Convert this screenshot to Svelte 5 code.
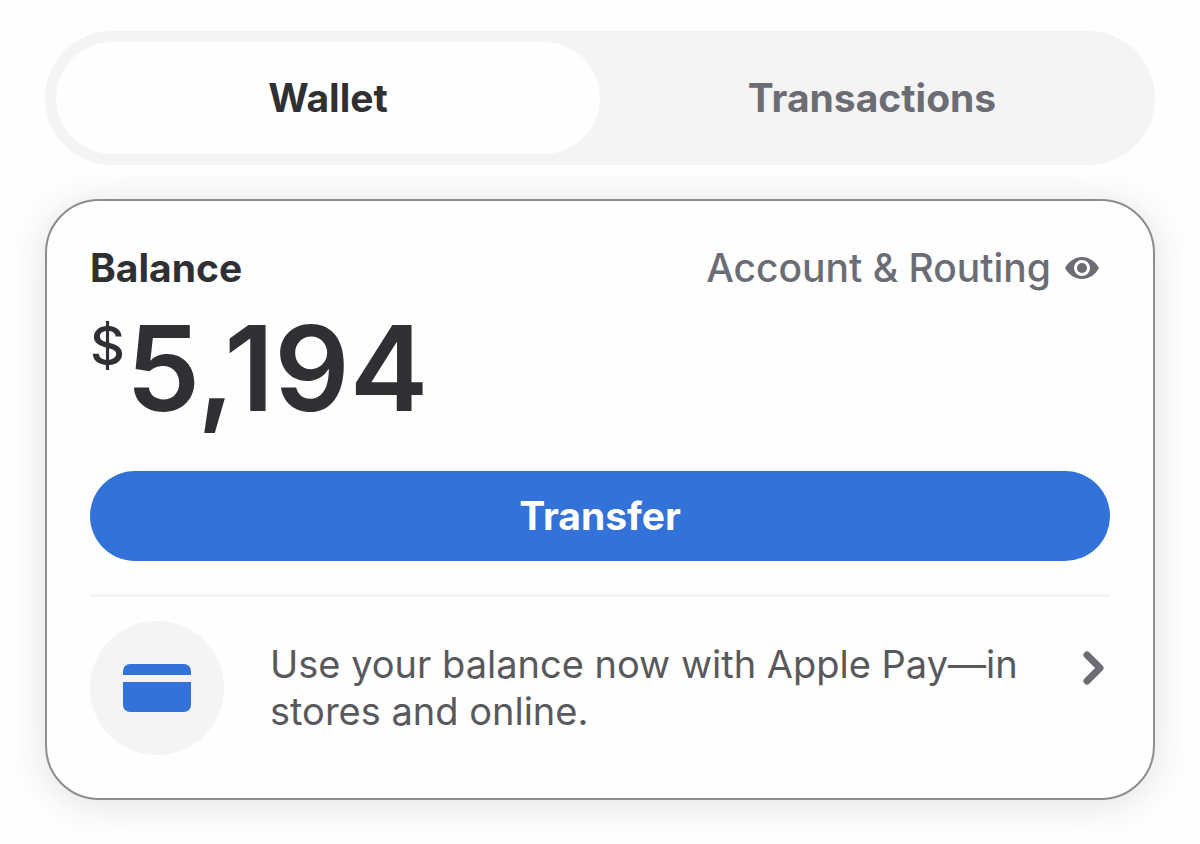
<script>
    let activeTab = 'wallet';
    let balance = 5194;

    $: formattedBalance = balance.toLocaleString('en-US');

    function selectTab(tab) {
        activeTab = tab;
    }
</script>

<main>
    <div class="tabs" role="tablist">
        <button type="button" role="tab" class="tab" class:active={activeTab === 'wallet'} aria-selected={activeTab === 'wallet'} on:click={() => selectTab('wallet')}>Wallet</button>
        <button type="button" role="tab" class="tab" class:active={activeTab === 'transactions'} aria-selected={activeTab === 'transactions'} on:click={() => selectTab('transactions')}>Transactions</button>
    </div>

    <section class="card">
        <div class="card-header">
            <h2>Balance</h2>
            <button type="button" class="account-button">
                Account &amp; Routing
                <svg class="eye" viewBox="0 0 34 22" aria-hidden="true">
                    <path fill-rule="evenodd" d="M0 11C4 4 10 0 17 0s13 4 17 11c-4 7-10 11-17 11S4 18 0 11Zm17-8a8 8 0 1 0 0 16 8 8 0 0 0 0-16Z" />
                    <circle cx="17" cy="11" r="5" />
                </svg>
            </button>
        </div>

        <p class="amount"><span class="currency">$</span>{formattedBalance}</p>

        <button type="button" class="transfer">Transfer</button>

        <!-- Apple Pay -->
        <a href="#apple-pay" class="promo">
            <span class="promo-icon">
                <svg viewBox="0 0 68 48" aria-hidden="true">
                    <path d="M0 11V7a7 7 0 0 1 7-7h54a7 7 0 0 1 7 7v4ZM0 18h68v23a7 7 0 0 1-7 7H7a7 7 0 0 1-7-7Z" />
                </svg>
            </span>
            <span class="promo-text">Use your balance now with Apple Pay—in stores and online.</span>
            <svg class="chevron" viewBox="0 0 24 36" aria-hidden="true">
                <path d="M5 5l13 13L5 31" />
            </svg>
        </a>
    </section>
</main>

<style>
    :global(body) {
        margin: 0;
        background-color: #fefefe;
        font-family: Inter, "Liberation Sans", sans-serif;
    }

    main {
        padding: 31px 45px 44px;
    }

    button {
        border: none;
        background: none;
        padding: 0;
        font-family: inherit;
        font-size: 39px;
        line-height: 48px;
        cursor: pointer;
    }

    .tabs {
        display: flex;
        padding: 11px;
        border-radius: 67px;
        background-color: #f4f4f4;
    }

    .tab {
        flex: 1;
        height: 112px;
        border-radius: 56px;
        font-weight: 700;
        color: #6c6d74;
    }

    .tab.active {
        background-color: #fefefe;
        color: #2f3033;
    }

    .card {
        margin-top: 34px;
        padding: 43px;
        border: 2px solid #8c8d92;
        border-radius: 54px;
        background-color: #fefefe;
        box-shadow: 0 4px 36px rgba(47, 48, 51, 0.14);
    }

    .card-header {
        display: flex;
        justify-content: space-between;
        align-items: center;
    }

    h2 {
        margin: 0;
        font-size: 39px;
        line-height: 48px;
        font-weight: 700;
        color: #2f3033;
    }

    .account-button {
        display: flex;
        align-items: center;
        gap: 14px;
        padding-right: 11px;
        font-weight: 500;
        color: #6c6d74;
    }

    .eye {
        width: 34px;
        height: 22px;
        fill: #6c6d74;
    }

    .amount {
        display: flex;
        align-items: flex-start;
        gap: 1px;
        margin: 16px 0 43px;
        font-size: 118px;
        line-height: 120px;
        font-weight: 600;
        color: #2f3033;
    }

    .currency {
        font-size: 54px;
        line-height: 76px;
        font-weight: 500;
    }

    .transfer {
        display: block;
        width: 100%;
        height: 90px;
        border-radius: 45px;
        background-color: #3272d9;
        font-weight: 700;
        color: #fefefe;
    }

    .promo {
        display: flex;
        align-items: center;
        gap: 46px;
        margin-top: 33px;
        padding-top: 24px;
        border-top: 3px solid #f4f4f4;
        text-decoration: none;
    }

    .promo-icon {
        display: flex;
        flex: none;
        align-items: center;
        justify-content: center;
        width: 134px;
        height: 134px;
        border-radius: 50%;
        background-color: #f4f4f4;
    }

    .promo-icon svg {
        width: 68px;
        height: 48px;
        fill: #3272d9;
    }

    .promo-text {
        flex: 1;
        font-size: 38px;
        line-height: 47px;
        color: #58595d;
    }

    .chevron {
        flex: none;
        align-self: flex-start;
        width: 24px;
        height: 36px;
        margin: 29px 4px 0 0;
        fill: none;
        stroke: #6c6d74;
        stroke-width: 7;
        stroke-linecap: round;
        stroke-linejoin: round;
    }
</style>
